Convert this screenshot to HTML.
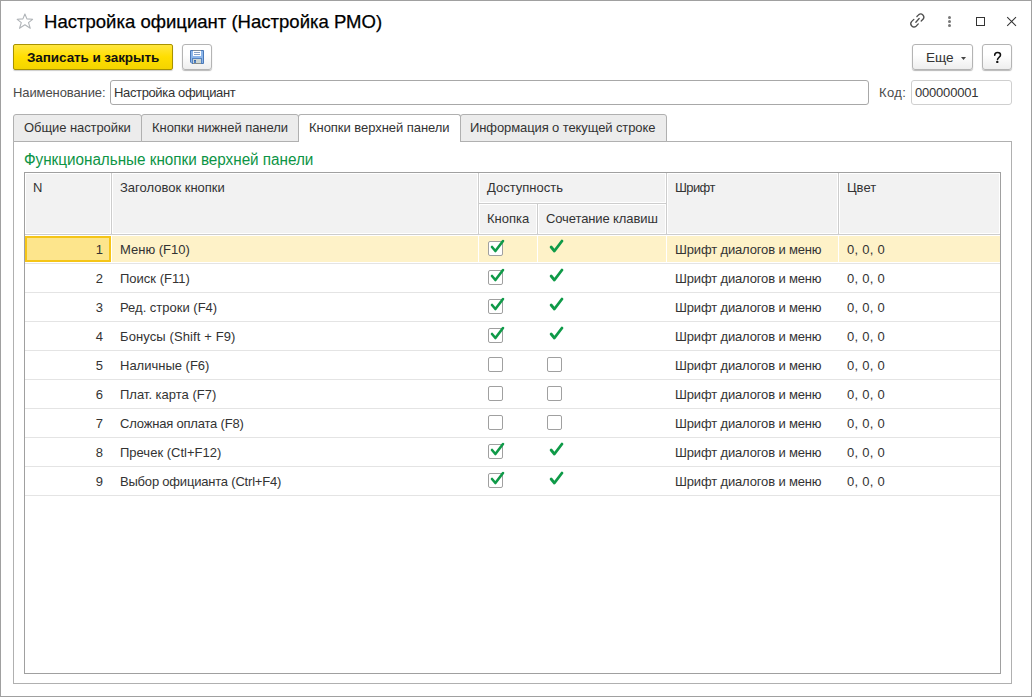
<!DOCTYPE html>
<html><head><meta charset="utf-8">
<style>
*{margin:0;padding:0;box-sizing:border-box}
html,body{width:1032px;height:697px;overflow:hidden;background:#fff}
body{position:relative;font-family:"Liberation Sans",sans-serif;font-size:13px;color:#333}
.a{position:absolute}
.t{position:absolute;white-space:nowrap;line-height:16px}
#win{left:0;top:0;width:1032px;height:697px;border:1px solid #a0a0a0}
.btn{position:absolute;border:1px solid #b4b4b4;border-radius:3px;background:linear-gradient(#fff 40%,#eeeeee);box-shadow:0 1px 1px rgba(0,0,0,.28)}
.inp{position:absolute;border:1px solid #a8a8a8;border-radius:3px;background:#fff}
.tab{position:absolute;top:114px;height:28px;border:1px solid #b0b0b0;border-radius:3px 3px 0 0;background:#ececec}
.hc{position:absolute;background:#f2f2f2;border:1px solid #fff}
.row{position:absolute;left:25px;width:975px;height:29px;border-bottom:1px solid #e2e2e2}
.cb{width:15px;height:15px;border:1px solid #a0a0a0;border-radius:2px;background:#fff}
</style></head><body>
<div id="win" class="a"></div>

<!-- star -->
<svg class="a" style="left:15px;top:12px" width="20" height="18" viewBox="0 0 20 18">
<path d="M9.9 2 L11.9 6.9 L17.6 7.3 L13.5 10.7 L15.3 16.3 L9.9 12.8 L4.5 16.3 L6.3 10.7 L2.2 7.3 L7.9 6.9 Z" fill="none" stroke="#b0b4b8" stroke-width="1.1" stroke-linejoin="round"/>
</svg>
<div class="t" style="left:44px;top:10px;font-size:18.55px;line-height:24px;color:#000;-webkit-text-stroke:0.25px #000">Настройка официант (Настройка РМО)</div>

<!-- link icon -->
<svg class="a" style="left:908px;top:11px" width="20" height="20" viewBox="0 0 20 20">
<g fill="none" stroke="#4d4d4d" stroke-width="1.3" stroke-linecap="round">
<path d="M5.85 8.35 L3.55 10.65 A3.2 3.2 0 0 0 8.05 15.15 L10.3 12.9"/>
<path d="M8.9 5.55 L10.8 3.65 A3.15 3.15 0 0 1 15.2 8.05 L13.2 10.05"/>
<path d="M7.85 11.2 L11.15 7.55"/>
</g></svg>
<!-- dots -->
<div class="a" style="left:948px;top:16px;width:3px;height:3px;border-radius:50%;background:#777"></div>
<div class="a" style="left:948px;top:20px;width:3px;height:3px;border-radius:50%;background:#777"></div>
<div class="a" style="left:948px;top:24px;width:3px;height:3px;border-radius:50%;background:#777"></div>
<!-- maximize -->
<div class="a" style="left:976px;top:17px;width:9px;height:9px;border:1px solid #333"></div>
<!-- close -->
<svg class="a" style="left:1006px;top:16px" width="12" height="12" viewBox="0 0 12 12">
<path d="M1.2 1.1 L10 9.9 M10 1.1 L1.2 9.9" stroke="#333" stroke-width="1.05"/>
</svg>

<!-- yellow button -->
<div class="a" style="left:13px;top:44px;width:160px;height:26px;border:1px solid #a89200;border-radius:2px;background:linear-gradient(#ffe640,#ffde00 50%,#f4d400);box-shadow:0 1px 1px rgba(0,0,0,.2)"></div>
<div class="t" style="left:27px;top:50px;font-weight:bold;font-size:13.5px;color:#111;letter-spacing:-0.09px">Записать и закрыть</div>
<!-- save button -->
<div class="btn" style="left:182px;top:44px;width:30px;height:26px"></div>
<svg class="a" style="left:190px;top:50px" width="14" height="14" viewBox="0 0 14 14">
<path d="M0.5 0.5 H13.5 V13.5 H2 L0.5 12 Z" fill="#8cb6ea" stroke="#4a79b9"/>
<rect x="3" y="0" width="8" height="1" fill="#7f8d9c"/>
<rect x="3" y="1" width="8" height="5" fill="#fff"/>
<rect x="4" y="2" width="6" height="1" fill="#86a2c8"/>
<rect x="4" y="4" width="6" height="1" fill="#86a2c8"/>
<rect x="2" y="8" width="10" height="5" fill="#5683c0"/>
<rect x="3" y="9" width="8" height="4" fill="#cdd6d3"/>
<rect x="4" y="10" width="2" height="3" fill="#4f80c4"/>
<rect x="4" y="10" width="2" height="1" fill="#3a66a4"/>
<rect x="3" y="13" width="8" height="1" fill="#878d8a"/>
</svg>

<!-- Еще / ? -->
<div class="btn" style="left:912px;top:44px;width:61px;height:26px"></div>
<div class="t" style="left:926px;top:50px;color:#333;font-size:13.6px">Еще</div>
<svg class="a" style="left:961px;top:57px" width="6" height="4" viewBox="0 0 6 4"><path d="M0 0 H5 L2.5 3 Z" fill="#444"/></svg>
<div class="btn" style="left:982px;top:44px;width:30px;height:26px"></div>
<svg class="a" style="left:992px;top:50px" width="12" height="15" viewBox="0 0 12 15"><path d="M2.7 5.3 C2.7 3.3 4 2.5 5.6 2.5 C7.3 2.5 8.5 3.6 8.5 4.9 C8.5 6.8 6.3 7.3 5.6 9.2 L5.55 9.4" fill="none" stroke="#111" stroke-width="1.55" stroke-linecap="round"/><circle cx="5.3" cy="11.9" r="1.2" fill="#111"/></svg>

<!-- name -->
<div class="t" style="left:13px;top:85px;color:#4a4a4a;letter-spacing:-0.1px">Наименование:</div>
<div class="inp" style="left:110px;top:80px;width:759px;height:25px"></div>
<div class="t" style="left:114px;top:85px;color:#333;letter-spacing:-0.36px">Настройка официант</div>
<div class="t" style="left:879px;top:85px;color:#4a4a4a;letter-spacing:0.35px">Код:</div>
<div class="inp" style="left:911px;top:80px;width:101px;height:25px;border-color:#cfcfcf"></div>
<div class="t" style="left:915px;top:85px;color:#333;letter-spacing:-0.2px">000000001</div>

<!-- panel -->
<div class="a" style="left:13px;top:141px;width:999px;height:543px;border:1px solid #b0b0b0"></div>
<!-- tabs -->
<div class="tab" style="left:13px;width:129px"></div>
<div class="tab" style="left:141px;width:158px"></div>
<div class="tab" style="left:460px;width:207px"></div>
<div class="tab" style="left:298px;width:163px;background:#fff;border-bottom:none;height:28px"></div>
<div class="t" style="left:24px;top:120px;letter-spacing:-0.08px">Общие настройки</div>
<div class="t" style="left:152px;top:120px;letter-spacing:-0.06px">Кнопки нижней панели</div>
<div class="t" style="left:309px;top:120px;letter-spacing:-0.045px">Кнопки верхней панели</div>
<div class="t" style="left:470px;top:120px;letter-spacing:-0.1px">Информация о текущей строке</div>

<div class="t" style="left:24px;top:151px;font-size:15.3px;line-height:18px;color:#0c9445;letter-spacing:-0.035px;transform:scaleY(1.1);transform-origin:0 14px">Функциональные кнопки верхней панели</div>

<!-- table -->
<div class="a" style="left:24px;top:172px;width:977px;height:502px;border:1px solid #a0a0a0"></div>
<div class="a" style="left:25px;top:173px;width:975px;height:62px;background:#cdcdcd"></div>
<div class="hc" style="left:25px;top:173px;width:86px;height:61px"></div>
<div class="hc" style="left:112px;top:173px;width:366px;height:61px"></div>
<div class="hc" style="left:479px;top:173px;width:187px;height:30px"></div>
<div class="hc" style="left:479px;top:204px;width:58px;height:30px"></div>
<div class="hc" style="left:538px;top:204px;width:128px;height:30px"></div>
<div class="hc" style="left:667px;top:173px;width:171px;height:61px"></div>
<div class="hc" style="left:839px;top:173px;width:161px;height:61px"></div>
<div class="t" style="left:33px;top:180px">N</div>
<div class="t" style="left:120px;top:180px">Заголовок кнопки</div>
<div class="t" style="left:487px;top:180px">Доступность</div>
<div class="t" style="left:487px;top:211px">Кнопка</div>
<div class="t" style="left:546px;top:211px;letter-spacing:-0.11px">Сочетание клавиш</div>
<div class="t" style="left:675px;top:180px;letter-spacing:-0.6px">Шрифт</div>
<div class="t" style="left:847px;top:180px">Цвет</div>

<!--ROWS-->
<div class="a" style="left:25px;top:236px;width:975px;height:26px;background:#fef2c8"></div>
<div class="a" style="left:111px;top:236px;width:1px;height:26px;background:#fff"></div>
<div class="a" style="left:478px;top:236px;width:1px;height:26px;background:#fff"></div>
<div class="a" style="left:537px;top:236px;width:1px;height:26px;background:#fff"></div>
<div class="a" style="left:666px;top:236px;width:1px;height:26px;background:#fff"></div>
<div class="a" style="left:838px;top:236px;width:1px;height:26px;background:#fff"></div>
<div class="a" style="left:25px;top:236px;width:86px;height:26px;background:#fde58c;border:2px solid #f5c518"></div>
<div class="a" style="left:25px;top:263px;width:975px;height:1px;background:#e4e4e4"></div>
<div class="t" style="left:25px;width:78px;text-align:right;top:242px">1</div>
<div class="t" style="left:120px;top:242px;letter-spacing:0px">Меню (F10)</div>
<div class="t" style="left:675px;top:242px;letter-spacing:-0.15px">Шрифт диалогов и меню</div>
<div class="t" style="left:847px;top:242px;letter-spacing:0.25px">0, 0, 0</div>
<div class="a cb" style="left:488px;top:241px"></div>
<svg class="a" style="left:484px;top:235px" width="24" height="26"><path d="M8 12 L11.4 16 L19 6" fill="none" stroke="#0f9a48" stroke-width="2.6" stroke-linecap="round" stroke-linejoin="round"/></svg>
<svg class="a" style="left:544px;top:235px" width="24" height="26"><path d="M7.1 12 L10.4 16 L18 6" fill="none" stroke="#0f9a48" stroke-width="2.8" stroke-linecap="round" stroke-linejoin="round"/></svg>
<div class="a" style="left:25px;top:292px;width:975px;height:1px;background:#e4e4e4"></div>
<div class="t" style="left:25px;width:78px;text-align:right;top:271px">2</div>
<div class="t" style="left:120px;top:271px;letter-spacing:0px">Поиск (F11)</div>
<div class="t" style="left:675px;top:271px;letter-spacing:-0.15px">Шрифт диалогов и меню</div>
<div class="t" style="left:847px;top:271px;letter-spacing:0.25px">0, 0, 0</div>
<div class="a cb" style="left:488px;top:270px"></div>
<svg class="a" style="left:484px;top:264px" width="24" height="26"><path d="M8 12 L11.4 16 L19 6" fill="none" stroke="#0f9a48" stroke-width="2.6" stroke-linecap="round" stroke-linejoin="round"/></svg>
<svg class="a" style="left:544px;top:264px" width="24" height="26"><path d="M7.1 12 L10.4 16 L18 6" fill="none" stroke="#0f9a48" stroke-width="2.8" stroke-linecap="round" stroke-linejoin="round"/></svg>
<div class="a" style="left:25px;top:321px;width:975px;height:1px;background:#e4e4e4"></div>
<div class="t" style="left:25px;width:78px;text-align:right;top:300px">3</div>
<div class="t" style="left:120px;top:300px;letter-spacing:0px">Ред. строки (F4)</div>
<div class="t" style="left:675px;top:300px;letter-spacing:-0.15px">Шрифт диалогов и меню</div>
<div class="t" style="left:847px;top:300px;letter-spacing:0.25px">0, 0, 0</div>
<div class="a cb" style="left:488px;top:299px"></div>
<svg class="a" style="left:484px;top:293px" width="24" height="26"><path d="M8 12 L11.4 16 L19 6" fill="none" stroke="#0f9a48" stroke-width="2.6" stroke-linecap="round" stroke-linejoin="round"/></svg>
<svg class="a" style="left:544px;top:293px" width="24" height="26"><path d="M7.1 12 L10.4 16 L18 6" fill="none" stroke="#0f9a48" stroke-width="2.8" stroke-linecap="round" stroke-linejoin="round"/></svg>
<div class="a" style="left:25px;top:350px;width:975px;height:1px;background:#e4e4e4"></div>
<div class="t" style="left:25px;width:78px;text-align:right;top:329px">4</div>
<div class="t" style="left:120px;top:329px;letter-spacing:0.11px">Бонусы (Shift + F9)</div>
<div class="t" style="left:675px;top:329px;letter-spacing:-0.15px">Шрифт диалогов и меню</div>
<div class="t" style="left:847px;top:329px;letter-spacing:0.25px">0, 0, 0</div>
<div class="a cb" style="left:488px;top:328px"></div>
<svg class="a" style="left:484px;top:322px" width="24" height="26"><path d="M8 12 L11.4 16 L19 6" fill="none" stroke="#0f9a48" stroke-width="2.6" stroke-linecap="round" stroke-linejoin="round"/></svg>
<svg class="a" style="left:544px;top:322px" width="24" height="26"><path d="M7.1 12 L10.4 16 L18 6" fill="none" stroke="#0f9a48" stroke-width="2.8" stroke-linecap="round" stroke-linejoin="round"/></svg>
<div class="a" style="left:25px;top:379px;width:975px;height:1px;background:#e4e4e4"></div>
<div class="t" style="left:25px;width:78px;text-align:right;top:358px">5</div>
<div class="t" style="left:120px;top:358px;letter-spacing:0px">Наличные (F6)</div>
<div class="t" style="left:675px;top:358px;letter-spacing:-0.15px">Шрифт диалогов и меню</div>
<div class="t" style="left:847px;top:358px;letter-spacing:0.25px">0, 0, 0</div>
<div class="a cb" style="left:488px;top:357px"></div>
<div class="a cb" style="left:547px;top:357px"></div>
<div class="a" style="left:25px;top:408px;width:975px;height:1px;background:#e4e4e4"></div>
<div class="t" style="left:25px;width:78px;text-align:right;top:387px">6</div>
<div class="t" style="left:120px;top:387px;letter-spacing:0px">Плат. карта (F7)</div>
<div class="t" style="left:675px;top:387px;letter-spacing:-0.15px">Шрифт диалогов и меню</div>
<div class="t" style="left:847px;top:387px;letter-spacing:0.25px">0, 0, 0</div>
<div class="a cb" style="left:488px;top:386px"></div>
<div class="a cb" style="left:547px;top:386px"></div>
<div class="a" style="left:25px;top:437px;width:975px;height:1px;background:#e4e4e4"></div>
<div class="t" style="left:25px;width:78px;text-align:right;top:416px">7</div>
<div class="t" style="left:120px;top:416px;letter-spacing:-0.19px">Сложная оплата (F8)</div>
<div class="t" style="left:675px;top:416px;letter-spacing:-0.15px">Шрифт диалогов и меню</div>
<div class="t" style="left:847px;top:416px;letter-spacing:0.25px">0, 0, 0</div>
<div class="a cb" style="left:488px;top:415px"></div>
<div class="a cb" style="left:547px;top:415px"></div>
<div class="a" style="left:25px;top:466px;width:975px;height:1px;background:#e4e4e4"></div>
<div class="t" style="left:25px;width:78px;text-align:right;top:445px">8</div>
<div class="t" style="left:120px;top:445px;letter-spacing:0px">Пречек (Ctl+F12)</div>
<div class="t" style="left:675px;top:445px;letter-spacing:-0.15px">Шрифт диалогов и меню</div>
<div class="t" style="left:847px;top:445px;letter-spacing:0.25px">0, 0, 0</div>
<div class="a cb" style="left:488px;top:444px"></div>
<svg class="a" style="left:484px;top:438px" width="24" height="26"><path d="M8 12 L11.4 16 L19 6" fill="none" stroke="#0f9a48" stroke-width="2.6" stroke-linecap="round" stroke-linejoin="round"/></svg>
<svg class="a" style="left:544px;top:438px" width="24" height="26"><path d="M7.1 12 L10.4 16 L18 6" fill="none" stroke="#0f9a48" stroke-width="2.8" stroke-linecap="round" stroke-linejoin="round"/></svg>
<div class="a" style="left:25px;top:495px;width:975px;height:1px;background:#e4e4e4"></div>
<div class="t" style="left:25px;width:78px;text-align:right;top:474px">9</div>
<div class="t" style="left:120px;top:474px;letter-spacing:-0.2px">Выбор официанта (Ctrl+F4)</div>
<div class="t" style="left:675px;top:474px;letter-spacing:-0.15px">Шрифт диалогов и меню</div>
<div class="t" style="left:847px;top:474px;letter-spacing:0.25px">0, 0, 0</div>
<div class="a cb" style="left:488px;top:473px"></div>
<svg class="a" style="left:484px;top:467px" width="24" height="26"><path d="M8 12 L11.4 16 L19 6" fill="none" stroke="#0f9a48" stroke-width="2.6" stroke-linecap="round" stroke-linejoin="round"/></svg>
<svg class="a" style="left:544px;top:467px" width="24" height="26"><path d="M7.1 12 L10.4 16 L18 6" fill="none" stroke="#0f9a48" stroke-width="2.8" stroke-linecap="round" stroke-linejoin="round"/></svg>
<!--/ROWS-->
</body></html>
